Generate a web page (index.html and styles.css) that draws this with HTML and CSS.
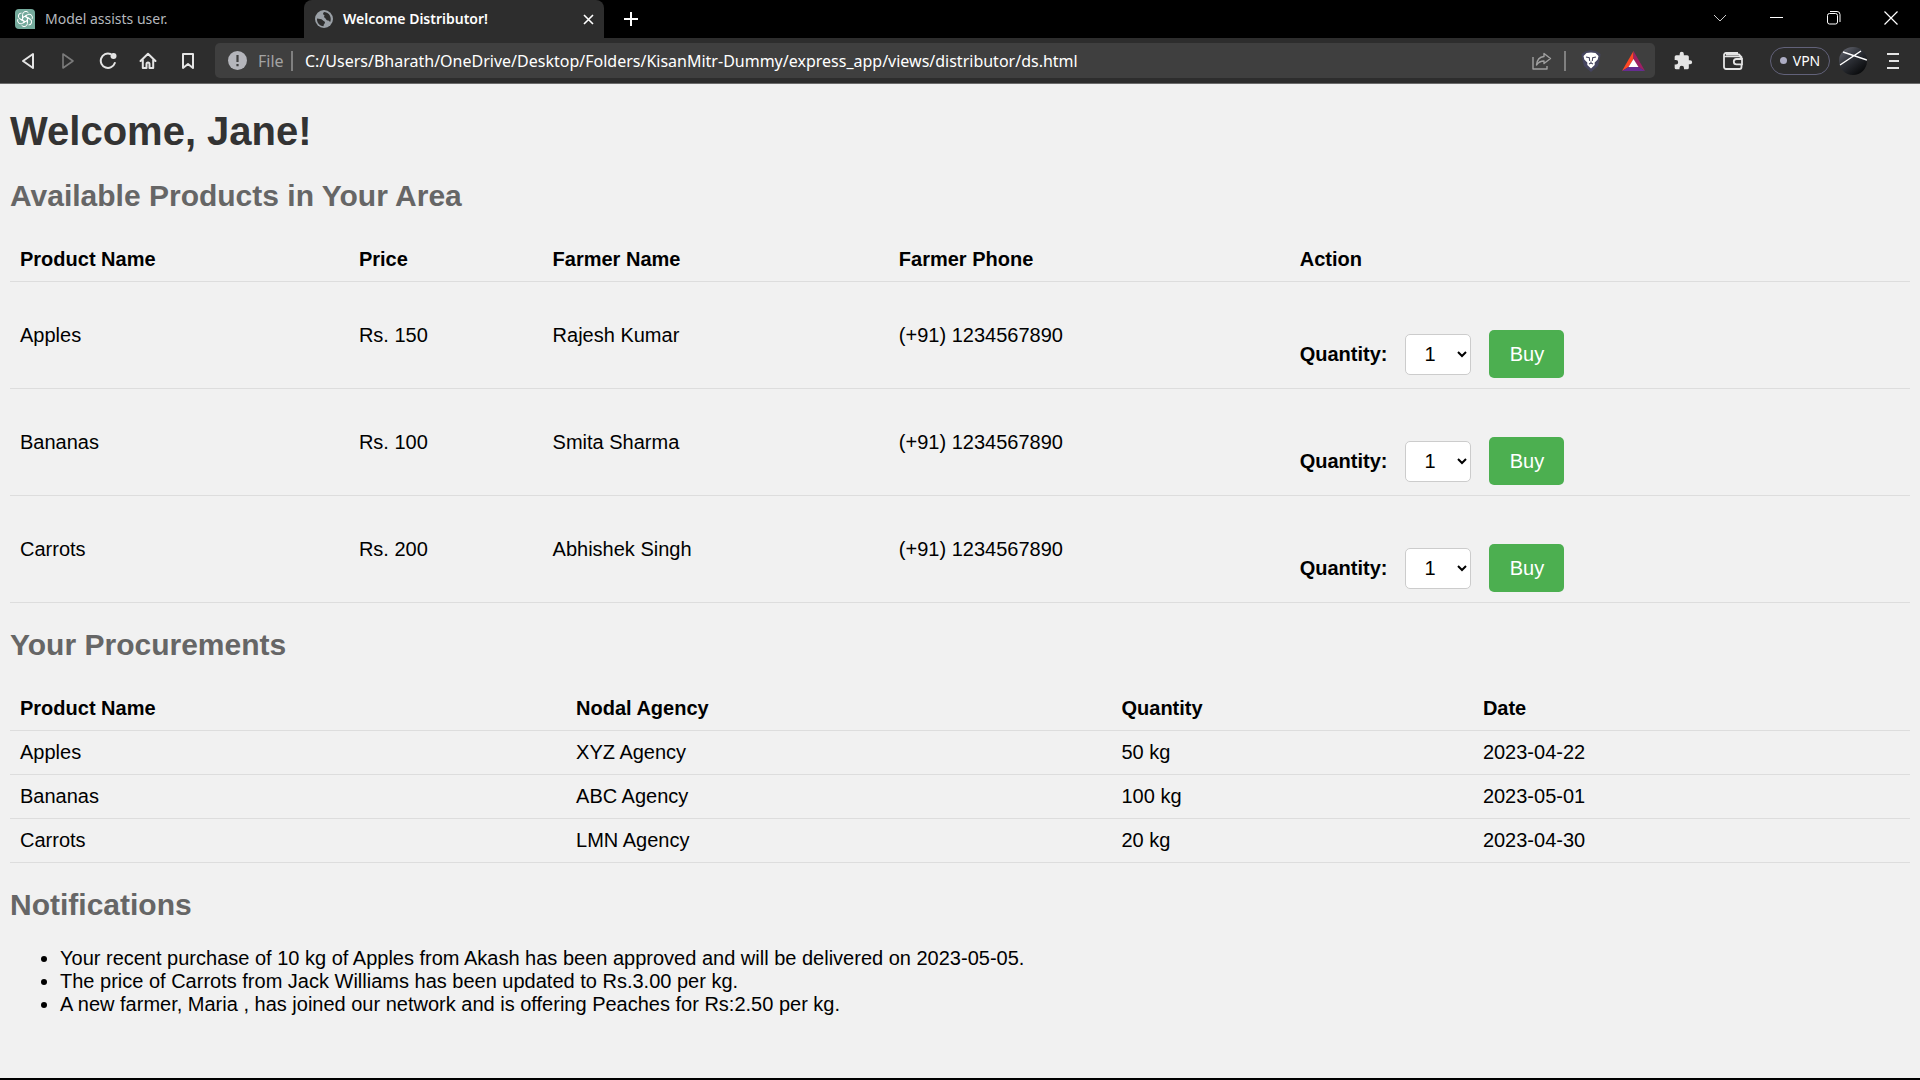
FILE: index.html
```html
<!DOCTYPE html>
<html lang="en">
<head>
<meta charset="utf-8">
<meta name="viewport" content="width=device-width, initial-scale=1">
<title>Welcome Distributor!</title>
<link rel="stylesheet" href="styles.css">
</head>
<body>
<header class="browser">
  <div class="tabstrip">
    <div class="tab">
      <svg class="tab-icon" width="20" height="20" viewBox="0 0 20 20"><path d="M4 0h12a4 4 0 0 1 4 4v16H4a4 4 0 0 1-4-4V4a4 4 0 0 1 4-4z" fill="#74aa9c"/><g fill="none" stroke="#fff" stroke-width="1"><path id="petal" d="M7.600 11.400V5.400a3.200 3.200 0 0 1 5.900-1.500M7.600 8.600 12 6"/><use href="#petal" transform="rotate(60 10 10)"/><use href="#petal" transform="rotate(120 10 10)"/><use href="#petal" transform="rotate(180 10 10)"/><use href="#petal" transform="rotate(240 10 10)"/><use href="#petal" transform="rotate(300 10 10)"/></g></svg>
      <span class="tab-title">Model assists user.</span>
    </div>
    <div class="tab tab-active">
      <svg class="tab-icon" width="18" height="18" viewBox="0 0 18 18"><circle cx="9" cy="9" r="9" fill="#9aa0a6"/><path d="M2 8.500c2 .3 4.500.3 5.500 1.500 1 1.200 2.500 1.200 2.500 2.500s-1.500 1.300-1.500 3.700C4.500 16 1.600 12.500 2 8.500zM9.500 1.900c-2 .6-1.500 2.600-.5 3 1.500.6-1 1.600.5 2.600 1.800 1.200 1.500 3 3.500 3 1.500 0 1.500 1.500 2.200 1.500 1.800-4-.5-9.600-5.700-10.100z" fill="#2d2d2d"/></svg>
      <span class="tab-title">Welcome Distributor!</span>
      <button class="icon-button tab-close" aria-label="Close tab"><svg width="11" height="11" viewBox="0 0 11 11"><path d="M1 1l9 9M10 1l-9 9" stroke="#fff" stroke-width="1.6"/></svg></button>
    </div>
    <button class="icon-button new-tab" aria-label="New tab"><svg width="16" height="16" viewBox="0 0 16 16"><path d="M8 1v14M1 8h14" stroke="#fff" stroke-width="2"/></svg></button>
    <div class="window-controls">
      <button class="icon-button" aria-label="Search tabs"><svg width="14" height="14" viewBox="0 0 14 14"><path d="M1 4l6 6 6-6" fill="none" stroke="#ccc"/></svg></button>
      <button class="icon-button" aria-label="Minimize"><svg width="13" height="14" viewBox="0 0 13 14"><path d="M0 6.500h13" stroke="#fff"/></svg></button>
      <button class="icon-button" aria-label="Restore"><svg width="14" height="14" viewBox="0 0 14 14"><rect x=".5" y="2.500" width="10" height="10.500" rx="2" fill="none" stroke="#fff"/><path d="M3 .5h7a3 3 0 0 1 3 3V11" fill="none" stroke="#fff"/></svg></button>
      <button class="icon-button" aria-label="Close"><svg width="14" height="14" viewBox="0 0 14 14"><path d="M.5.5l13 13M13.500.5l-13 13" stroke="#fff" stroke-width="1.200"/></svg></button>
    </div>
  </div>
  <div class="toolbar">
    <nav class="nav-buttons">
      <button class="icon-button" aria-label="Back"><svg width="14" height="18" viewBox="0 0 14 18"><path d="M12 2v14L2 9z" fill="none" stroke="#e4e4e4" stroke-width="2" stroke-linejoin="round"/></svg></button>
      <button class="icon-button" aria-label="Forward"><svg width="14" height="18" viewBox="0 0 14 18"><path d="M2 2v14l10-7z" fill="none" stroke="#7b7b7b" stroke-width="1.600" stroke-linejoin="round"/></svg></button>
      <button class="icon-button" aria-label="Reload"><svg width="18" height="18" viewBox="0 0 18 18"><path d="M11.500 2A7.200 7.200 0 1 0 15.800 11" fill="none" stroke="#e4e4e4" stroke-width="2" stroke-linecap="round"/><circle cx="14.500" cy="4" r="3" fill="#e4e4e4"/></svg></button>
      <button class="icon-button" aria-label="Home"><svg width="18" height="18" viewBox="0 0 18 18"><path d="M1.500 9L9 1.800 16.500 9M3.800 8v8h3.700v-4a1.500 1.500 0 0 1 3 0v4h3.700V8" fill="none" stroke="#e4e4e4" stroke-width="2" stroke-linecap="round" stroke-linejoin="round"/></svg></button>
      <button class="icon-button" aria-label="Bookmark"><svg width="14" height="18" viewBox="0 0 14 18"><path d="M2 2h10v14l-5-4-5 4z" fill="none" stroke="#e4e4e4" stroke-width="2" stroke-linejoin="round"/></svg></button>
    </nav>
    <div class="address">
      <svg class="info" width="19" height="19" viewBox="0 0 19 19"><circle cx="9.500" cy="9.500" r="9.500" fill="#b4b5bb"/><path d="M9.500 4v7M9.500 13v2.200" stroke="#3f3f3f" stroke-width="2.200"/></svg>
      <label class="scheme" for="url">File</label>
      <span class="divider"></span>
      <input class="url" id="url" type="text" value="C:/Users/Bharath/OneDrive/Desktop/Folders/KisanMitr-Dummy/express_app/views/distributor/ds.html">
      <button class="icon-button" aria-label="Share"><svg width="20" height="18" viewBox="0 0 20 18"><path d="M1 5v12h14v-3M12 1.500l6.500 5L12 11.500V9C8.500 9 6.500 10 4.500 13 5 8 8 4.800 12 4.500z" fill="none" stroke="#a0a0a0" stroke-width="1.400" stroke-linejoin="round"/></svg></button>
      <span class="divider"></span>
      <button class="icon-button shield" aria-label="Shields"><svg width="20" height="22" viewBox="0 0 20 22"><path d="M4.500 1.500 10 0l5.500 1.500L19.500 4l-.5 4-2 8-7 6-7-6-2-8L.5 4z" fill="#45455f"/><path d="M5.500 3 10 2.500l4.500.5L17.500 6l-.8 3.500-3 3v2.500L10 18.500 6.300 15v-2.500l-3-3L2.500 6z" fill="#fff"/><path d="M5 7l3.300.8.4 3.200M15 7l-3.300.8-.4 3.200M8 14l2-1 2 1M10 11.500V13" fill="none" stroke="#45455f" stroke-width="1.100"/></svg></button>
      <button class="icon-button rewards" aria-label="Rewards"><svg width="23" height="20" viewBox="0 0 23 20"><path d="M11.500 0 0 20l6.500-4 5-8z" fill="#ff4724"/><path d="M11.500 0 23 20l-6.500-4-5-8z" fill="#9e1f63"/><path d="M0 20h23l-6.500-4h-10z" fill="#662d91"/><path d="M11.500 8l5 8h-10z" fill="#fff"/></svg></button>
    </div>
    <div class="tools">
      <button class="icon-button tool" aria-label="Extensions"><svg width="20" height="20" viewBox="0 0 24 24"><path d="M20.500 11H19V7a2 2 0 0 0-2-2h-4V3.500a2.500 2.500 0 0 0-5 0V5H4a2 2 0 0 0-2 2v3.800h1.500a2.700 2.700 0 0 1 0 5.400H2V20a2 2 0 0 0 2 2h3.800v-1.500a2.700 2.700 0 0 1 5.400 0V22H17a2 2 0 0 0 2-2v-4h1.500a2.500 2.500 0 0 0 0-5z" fill="#e4e4e4"/></svg></button>
      <button class="icon-button tool" aria-label="Wallet"><svg width="20" height="18" viewBox="0 0 20 18"><path d="M18.500 6.500V5L16 2.500H3M18.500 12v3a2 2 0 0 1-2 2H3a2 2 0 0 1-2-2V3a2 2 0 0 1 2-2h12" fill="none" stroke="#e4e4e4" stroke-width="1.800"/><path d="M1 4.500h15a2.500 2.500 0 0 1 2.500 2.500" fill="none" stroke="#e4e4e4" stroke-width="1.500"/><path d="M19 7h-5.500a2.700 2.700 0 0 0 0 5.400H19z" fill="none" stroke="#e4e4e4" stroke-width="1.800"/></svg></button>
      <button class="vpn"><span class="vpn-dot"></span>VPN</button>
      <button class="icon-button profile" aria-label="Profile"><svg width="28" height="28" viewBox="0 0 28 28"><defs><linearGradient id="sky" x1="0" y1="0" x2=".8" y2="1"><stop offset="0" stop-color="#70727c"/><stop offset=".45" stop-color="#30333a"/><stop offset="1" stop-color="#050607"/></linearGradient><clipPath id="round"><circle cx="14" cy="14" r="14"/></clipPath></defs><g clip-path="url(#round)"><path d="M0 0h28v28H0z" fill="url(#sky)"/><path d="M1 18 22 4M4 5l24 8" stroke="#fff" stroke-width="1.500"/></g></svg></button>
      <button class="icon-button menu" aria-label="Menu"><svg width="12" height="16" viewBox="0 0 12 16"><path d="M0 1h12M2 8h10M0 15h12" stroke="#e4e4e4" stroke-width="2"/></svg></button>
    </div>
  </div>
</header>
<main class="page">
  <h1>Welcome, Jane!</h1>
  <section>
    <h2>Available Products in Your Area</h2>
    <table>
      <thead><tr><th>Product Name</th><th>Price</th><th>Farmer Name</th><th>Farmer Phone</th><th>Action</th></tr></thead>
      <tbody>
        <tr><td>Apples</td><td>Rs. 150</td><td>Rajesh Kumar</td><td>(+91) 1234567890</td>
          <td><form class="order"><label for="qty-apples">Quantity:</label><select id="qty-apples"><option>1</option><option>2</option><option>3</option></select><button class="buy" type="button">Buy</button></form></td></tr>
        <tr><td>Bananas</td><td>Rs. 100</td><td>Smita Sharma</td><td>(+91) 1234567890</td>
          <td><form class="order"><label for="qty-bananas">Quantity:</label><select id="qty-bananas"><option>1</option><option>2</option><option>3</option></select><button class="buy" type="button">Buy</button></form></td></tr>
        <tr><td>Carrots</td><td>Rs. 200</td><td>Abhishek Singh</td><td>(+91) 1234567890</td>
          <td><form class="order"><label for="qty-carrots">Quantity:</label><select id="qty-carrots"><option>1</option><option>2</option><option>3</option></select><button class="buy" type="button">Buy</button></form></td></tr>
      </tbody>
    </table>
  </section>
  <section>
    <h2>Your Procurements</h2>
    <table>
      <thead><tr><th>Product Name</th><th>Nodal Agency</th><th>Quantity</th><th>Date</th></tr></thead>
      <tbody>
        <tr><td>Apples</td><td>XYZ Agency</td><td>50 kg</td><td>2023-04-22</td></tr>
        <tr><td>Bananas</td><td>ABC Agency</td><td>100 kg</td><td>2023-05-01</td></tr>
        <tr><td>Carrots</td><td>LMN Agency</td><td>20 kg</td><td>2023-04-30</td></tr>
      </tbody>
    </table>
  </section>
  <section>
    <h2>Notifications</h2>
    <ul>
      <li>Your recent purchase of 10 kg of Apples from Akash has been approved and will be delivered on 2023-05-05.</li>
      <li>The price of Carrots from Jack Williams has been updated to Rs.3.00 per kg.</li>
      <li>A new farmer, Maria , has joined our network and is offering Peaches for Rs:2.50 per kg.</li>
    </ul>
  </section>
</main>
</body>
</html>
```
FILE: styles.css
```css
* {
  box-sizing: border-box;
}

body {
  display: flex;
  flex-direction: column;
  min-height: 100vh;
  margin: 0;
  border-bottom: 2px solid #000;
  background: #f1f1f1;
  color: #000;
  font: 20px/23px "Liberation Sans", Arial, sans-serif;
}

.browser {
  background: #2d2d2d;
  border-bottom: 1px solid #6b6b6b;
  color: #fff;
  font: 15px/20px "Noto Sans", "Segoe UI", sans-serif;
}

.icon-button {
  display: flex;
  flex: none;
  align-items: center;
  justify-content: center;
  width: 40px;
  height: 36px;
  padding: 0;
  border: 0;
  background: none;
}

/* Tab strip */
.tabstrip {
  display: flex;
  height: 38px;
  padding-right: 1px;
  background: #000;
}

.tab {
  display: flex;
  align-items: center;
  gap: 10px;
  width: 304px;
  padding: 0 15px;
  color: #b5b8bd;
  font-size: 14px;
}

.tab-active {
  width: 300px;
  padding: 0 0 0 11px;
  border-radius: 8px 8px 0 0;
  background: #2d2d2d;
  color: #fff;
  font-weight: 600;
}

.tab-title {
  white-space: nowrap;
}

.tab-close {
  width: 32px;
  margin-left: auto;
}

.new-tab {
  width: 54px;
  height: 38px;
}

.window-controls {
  display: flex;
  margin-left: auto;
}

.window-controls .icon-button {
  width: 57px;
}

/* Toolbar */
.toolbar {
  display: flex;
  align-items: center;
  height: 45px;
  padding: 0 11px 0 8px;
}

.nav-buttons,
.tools {
  display: flex;
  align-items: center;
}

.address {
  display: flex;
  flex: 1;
  align-items: center;
  height: 35px;
  margin: 0 3px 0 7px;
  padding: 0 3px 0 13px;
  border-radius: 5px;
  background: #3f3f3f;
}

.info {
  flex: none;
  margin-right: 11px;
}

.scheme {
  width: 31px;
  color: #a3a3a3;
  font-size: 16px;
}

.divider {
  flex: none;
  width: 2px;
  height: 20px;
  margin: 0 2px;
  background: #808080;
}

.url {
  flex: 1;
  min-width: 0;
  padding: 0 10px;
  border: 0;
  outline: 0;
  background: none;
  color: #fff;
  font: 16px/24px "Noto Sans", "Segoe UI", sans-serif;
}

.shield {
  width: 46px;
}

.rewards {
  width: 38px;
}

.tool {
  width: 50px;
}

.vpn {
  display: flex;
  align-items: center;
  justify-content: center;
  gap: 6px;
  width: 60px;
  height: 28px;
  margin: 0 9px 0 12px;
  padding: 0;
  border: 1px solid #62627a;
  border-radius: 14px;
  background: none;
  color: #fff;
  font: 14px/20px "Noto Sans", "Segoe UI", sans-serif;
}

.vpn-dot {
  width: 7px;
  height: 7px;
  border-radius: 50%;
  background: #adadc4;
}

.profile {
  width: 28px;
}

.menu {
  width: 32px;
  margin-left: 10px;
}

/* Page */
.page {
  flex: 1;
  padding: 0 10px 25px;
}

h1 {
  margin: 24px 0;
  color: #333;
  font-size: 40px;
  line-height: 46px;
}

h2 {
  margin: 25px 0;
  color: #666;
  font-size: 30px;
  line-height: 34px;
}

table {
  width: 100%;
  border-collapse: collapse;
}

th,
td {
  padding: 10px;
  border-bottom: 1px solid #ddd;
  text-align: left;
}

.order {
  display: flex;
  align-items: center;
  margin-top: 38px;
}

.order label {
  margin-right: 18px;
  font-weight: bold;
}

.order select {
  width: 66px;
  height: 41px;
  margin-right: 18px;
  padding: 0 0 0 14px;
  border: 1px solid #ccc;
  border-radius: 5px;
  background-color: #fff;
  color: #000;
  font: inherit;
}

.buy {
  width: 75px;
  height: 48px;
  padding: 0;
  border: 0;
  border-radius: 5px;
  background: #4caf50;
  color: #fff;
  font: inherit;
}

ul {
  margin: 24px 0 0;
  padding-left: 50px;
}
```
